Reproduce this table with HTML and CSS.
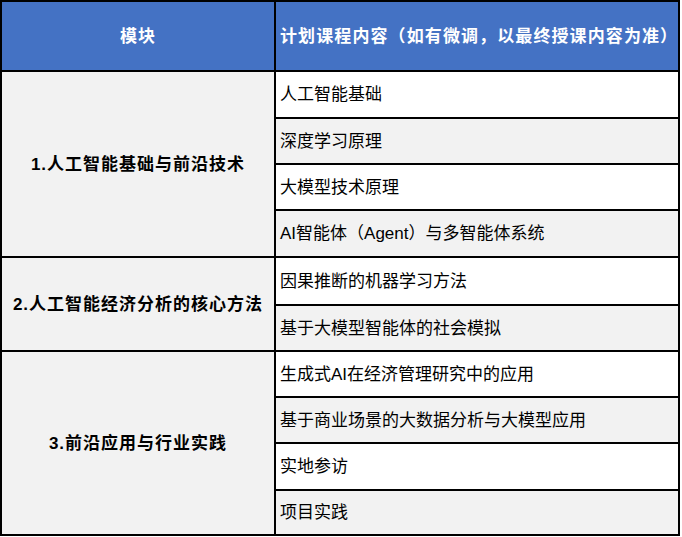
FILE: index.html
```html
<!DOCTYPE html>
<html lang="zh-CN">
<head>
<meta charset="utf-8">
<link rel="stylesheet" href="styles.css">
</head>
<body>
<div class="table">
  <div class="cell head head-left">模块</div>
  <div class="cell head head-right">计划课程内容（如有微调，以最终授课内容为准）</div>

  <div class="cell module m1">1.人工智能基础与前沿技术</div>
  <div class="cell item r1 white">人工智能基础</div>
  <div class="cell item r2 gray">深度学习原理</div>
  <div class="cell item r3 white">大模型技术原理</div>
  <div class="cell item r4 gray">AI智能体（Agent）与多智能体系统</div>

  <div class="cell module m2">2.人工智能经济分析的核心方法</div>
  <div class="cell item r5 white">因果推断的机器学习方法</div>
  <div class="cell item r6 gray">基于大模型智能体的社会模拟</div>

  <div class="cell module m3">3.前沿应用与行业实践</div>
  <div class="cell item r7 white">生成式AI在经济管理研究中的应用</div>
  <div class="cell item r8 gray">基于商业场景的大数据分析与大模型应用</div>
  <div class="cell item r9 white">实地参访</div>
  <div class="cell item r10 gray">项目实践</div>
</div>
</body>
</html>
```

FILE: styles.css
```css
html, body {
  margin: 0;
  padding: 0;
  background: #ffffff;
}

body {
  font-family: "Liberation Sans", "Noto Sans CJK SC", sans-serif;
  color: #000000;
}

.table {
  display: grid;
  width: 680px;
  box-sizing: border-box;
  padding: 2px;
  gap: 2px;
  background: #000000;
  grid-template-columns: 272px 402px;
  grid-template-rows: 68px 45px 44px 44px 45px 46px 44px 44px 44px 45px 43px;
}

.cell {
  display: flex;
  align-items: center;
  font-size: 17px;
  line-height: 1;
  white-space: nowrap;
}

.head {
  background: #4472c4;
  color: #ffffff;
  font-weight: bold;
  letter-spacing: 1.1px;
}

.head-left {
  justify-content: center;
  grid-column: 1;
  grid-row: 1;
}

.head-right {
  grid-column: 2;
  grid-row: 1;
  padding-left: 4px;
}

.module {
  grid-column: 1;
  background: #f2f2f2;
  justify-content: center;
  font-weight: bold;
  letter-spacing: 1px;
}

.m1 { grid-row: 2 / 6; }
.m2 { grid-row: 6 / 8; }
.m3 { grid-row: 8 / 12; }

.item {
  grid-column: 2;
  padding-left: 4px;
}

.r1 { grid-row: 2; }
.r2 { grid-row: 3; }
.r3 { grid-row: 4; }
.r4 { grid-row: 5; }
.r5 { grid-row: 6; }
.r6 { grid-row: 7; }
.r7 { grid-row: 8; }
.r8 { grid-row: 9; }
.r9 { grid-row: 10; }
.r10 { grid-row: 11; }

.white { background: #ffffff; }
.gray { background: #f2f2f2; }
```
